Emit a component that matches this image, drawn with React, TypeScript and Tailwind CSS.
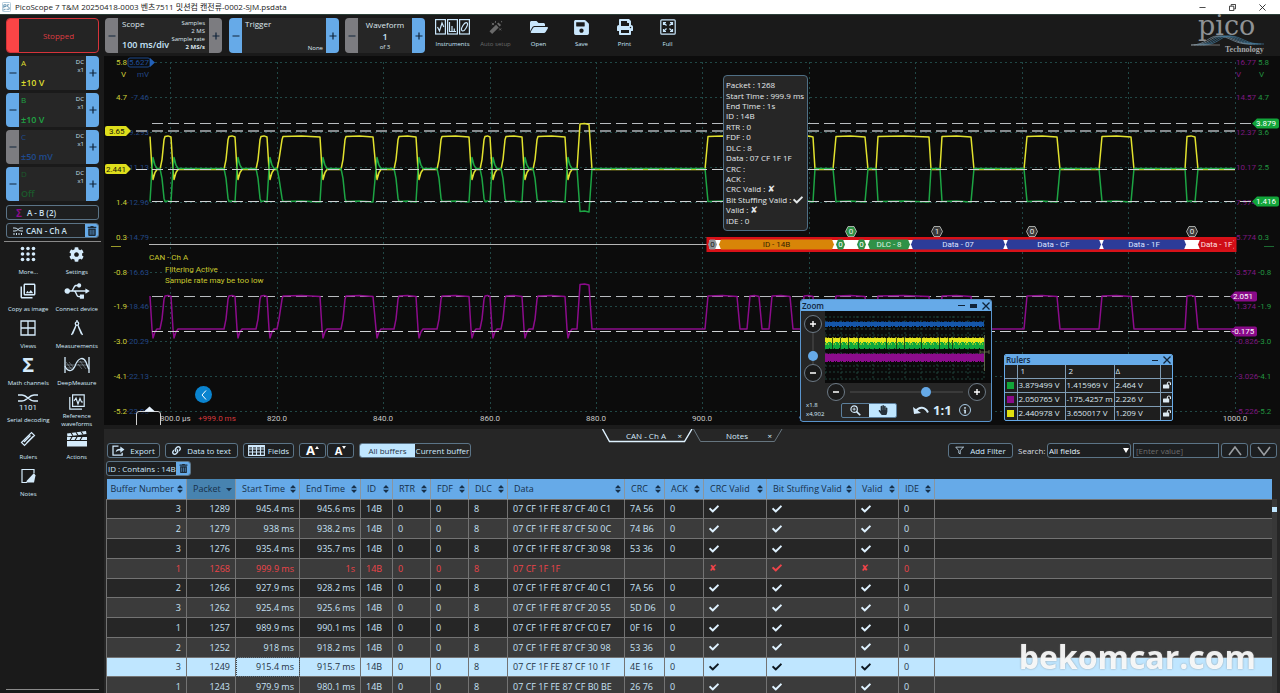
import { useState, type ReactNode } from "react";
import { FaCheck, FaCog, FaFolderOpen, FaHandPaper, FaLink, FaLockOpen, FaPrint, FaSave, FaTrashAlt, FaUsb } from "react-icons/fa";
import { FiFilter } from "react-icons/fi";
import { MdOutlinePhotoLibrary } from "react-icons/md";

/* ---------- data ---------- */

const CHANNELS = [
  { name: "A", range: "±10 V", color: "text-[#dede2e]", minus: true },
  { name: "B", range: "±10 V", color: "text-[#1fa544]", minus: true },
  { name: "C", range: "±50 mV", color: "text-[#1f4b8f]", minus: false },
  { name: "D", range: "Off", color: "text-[#1b5a2b]", minus: true },
];

const ROWS = [
  ["3", "1289", "945.4 ms", "945.6 ms", "07 CF 1F FE 87 CF 40 C1", "7A 56"],
  ["2", "1279", "938 ms", "938.2 ms", "07 CF 1F FE 87 CF 50 0C", "74 B6"],
  ["3", "1276", "935.4 ms", "935.7 ms", "07 CF 1F FE 87 CF 30 98", "53 36"],
  ["1", "1268", "999.9 ms", "1s", "07 CF 1F 1F", ""],
  ["2", "1266", "927.9 ms", "928.2 ms", "07 CF 1F FE 87 CF 40 C1", "7A 56"],
  ["3", "1262", "925.4 ms", "925.6 ms", "07 CF 1F FE 87 CF 20 55", "5D D6"],
  ["1", "1257", "989.9 ms", "990.1 ms", "07 CF 1F FE 87 CF C0 E7", "0F 16"],
  ["2", "1252", "918 ms", "918.2 ms", "07 CF 1F FE 87 CF 30 98", "53 36"],
  ["3", "1249", "915.4 ms", "915.7 ms", "07 CF 1F FE 87 CF 10 1F", "4E 16"],
  ["1", "1243", "979.9 ms", "980.1 ms", "07 CF 1F FE 87 CF B0 BE", "26 76"],
];

const COLUMNS = [
  { label: "Buffer Number", width: "w-[80px]", pad: "pl-1" },
  { label: "Packet", width: "w-[49px]", pad: "pl-[6px]" },
  { label: "Start Time", width: "w-[64px]", pad: "pl-[6px]" },
  { label: "End Time", width: "w-[61px]", pad: "pl-[6px]" },
  { label: "ID", width: "w-[32px]", pad: "pl-[6px]" },
  { label: "RTR", width: "w-[38px]", pad: "pl-[6px]" },
  { label: "FDF", width: "w-[38px]", pad: "pl-[6px]" },
  { label: "DLC", width: "w-[39px]", pad: "pl-[6px]" },
  { label: "Data", width: "w-[117px]", pad: "pl-[6px]" },
  { label: "CRC", width: "w-[40px]", pad: "pl-[6px]" },
  { label: "ACK", width: "w-[39px]", pad: "pl-[6px]" },
  { label: "CRC Valid", width: "w-[63px]", pad: "pl-[6px]" },
  { label: "Bit Stuffing Valid", width: "w-[89px]", pad: "pl-[6px]" },
  { label: "Valid", width: "w-[43px]", pad: "pl-[6px]" },
  { label: "IDE", width: "w-[36px]", pad: "pl-[6px]" },
];

const RULERS = [
  { color: "bg-[#12a53a]", one: "3.879499 V", two: "1.415969 V", delta: "2.464 V" },
  { color: "bg-[#8a0a8a]", one: "2.050765 V", two: "-175.4257 m", delta: "2.226 V" },
  { color: "bg-[#e0e010]", one: "2.440978 V", two: "3.650017 V", delta: "1.209 V" },
];

const GRID_X = [170, 277, 383, 490, 596, 702, 809, 915, 1022, 1128, 1235];
const GRID_Y = [62, 97, 132, 167, 202, 237, 272, 306, 341, 376, 411];
const AXIS_A = ["5.8", "4.7", "", "", "1.4", "0.3", "-0.8", "-1.9", "-3.0", "-4.1", "-5.2"];
const AXIS_C = ["", "-7.46", "-9.293", "-11.13", "-12.96", "-14.79", "-16.63", "-18.46", "-20.29", "-22.13", "-23.96"];
const AXIS_MATH = ["16.77", "14.57", "12.37", "10.17", "7.974", "5.774", "3.574", "1.374", "-0.826", "-3.026", "-5.226"];
const AXIS_B = ["5.8", "4.7", "3.6", "2.5", "", "0.3", "-0.8", "-1.9", "-3.0", "-4.1", "-5.2"];

// rise start, top start, top end, fall end
const PULSES = [
  [160, 165, 171, 173], [224, 229, 235, 237], [256, 261, 267, 269], [277, 283, 320, 322],
  [341, 346, 373, 376], [394, 399, 416, 418], [437, 442, 469, 471], [480, 485, 490, 492],
  [501, 506, 522, 524], [533, 538, 565, 567], [577, 580, 589, 592], [705, 708, 737, 740],
  [747, 750, 759, 762], [769, 772, 790, 793], [801, 804, 813, 815], [833, 836, 865, 868],
  [876, 878, 929, 931], [940, 942, 971, 974], [1024, 1027, 1057, 1060], [1099, 1102, 1131, 1134],
  [1185, 1187, 1195, 1198],
];
const LAST_SLOW = 9;
const TALL = 10;

const SEGMENTS = [
  { x: 708, w: 9, fill: "#8f9499", label: "0", ink: "#222" },
  { x: 719, w: 115, fill: "#d88508", label: "ID - 14B", ink: "#3a1f00" },
  { x: 836, w: 9, fill: "#2f9147", label: "0", ink: "#fff" },
  { x: 857, w: 9, fill: "#2f9147", label: "0", ink: "#fff" },
  { x: 868, w: 42, fill: "#2f9147", label: "DLC - 8", ink: "#dff5e2" },
  { x: 911, w: 94, fill: "#2c3c99", label: "Data - 07", ink: "#dde3ff" },
  { x: 1006, w: 95, fill: "#2c3c99", label: "Data - CF", ink: "#dde3ff" },
  { x: 1102, w: 84, fill: "#2c3c99", label: "Data - 1F", ink: "#dde3ff" },
  { x: 1198, w: 37, fill: "#cf0d16", label: "Data - 1F", ink: "#ffe0e0" },
];

const STUFF_BITS = [
  { x: 851, bit: "0", fill: "#2f9147" },
  { x: 937, bit: "1", fill: "#3a3a3a" },
  { x: 1032, bit: "0", fill: "#3a3a3a" },
  { x: 1192, bit: "0", fill: "#3a3a3a" },
];

function trace(base: number, high: number, tall: number, kick: number) {
  const pts: number[][] = [[150, high], [152, base], [153, base + kick], [155, base + kick * 0.3], [157, base]];
  PULSES.forEach(([rise, top, end, fall], i) => {
    const h = i === TALL ? tall : high;
    pts.push([rise, base]);
    if (i <= LAST_SLOW) pts.push([rise + 2, base + (h - base) * 0.3], [top - 1, base + (h - base) * 0.9]);
    pts.push([top, h], [(top + end) / 2, h - 0.6], [end, h + 0.5], [fall, base]);
    if (i <= LAST_SLOW) pts.push([fall + 1, base + kick], [fall + 3, base + kick * 0.3], [fall + 5, base]);
  });
  pts.push([1235, base]);
  return pts.map(p => p.join(",")).join(" ");
}

/* ---------- small pieces ---------- */

function SideButton({ sign, gray, label }: { sign: "+" | "−"; gray?: boolean; label: string }) {
  return (
    <button aria-label={label} className={`w-[13px] shrink-0 self-stretch flex items-center justify-center text-[#10243a] ${gray ? "bg-[#7c7c80]" : "bg-[#66aae8]"}`}>
      <svg viewBox="0 0 8 8" className="size-[8px]" stroke="currentColor" strokeWidth="1.2" fill="none">
        <path d={sign === "+" ? "M0.5 4H7.5M4 0.5V7.5" : "M0.5 4H7.5"} />
      </svg>
    </button>
  );
}

function SortIcon({ down }: { down?: boolean }) {
  return (
    <svg viewBox="0 0 6 8" className="w-[6px] h-[8px] shrink-0" fill="currentColor">
      {!down && <path d="M3 0L6 3.2H0Z" />}
      {down ? <path d="M0 3H6L3 6.2Z" /> : <path d="M0 4.8H6L3 8Z" />}
    </svg>
  );
}

function Tool({ label, icon, dim }: { label: string; icon: ReactNode; dim?: boolean }) {
  return (
    <button className={`w-[43px] flex flex-col items-center ${dim ? "text-[#6a6a6a]" : "text-[#c9e6fb]"}`}>
      <span className="h-[18px] flex items-center justify-center">{icon}</span>
      <span className="text-[6px] leading-[8px] mt-1">{label}</span>
    </button>
  );
}

function MenuItem({ label, icon }: { label: string; icon: ReactNode }) {
  return (
    <button className="h-[37px] w-full flex flex-col items-center text-[#d5ebfb]">
      <span className="h-5 flex items-center justify-center">{icon}</span>
      <span className="h-4 flex items-center justify-center text-center text-[6px] leading-[8px]">{label}</span>
    </button>
  );
}

function Mark({ ok }: { ok: boolean }) {
  return ok ? <FaCheck aria-label="yes" className="size-[10px] inline-block" /> : <span className="font-['DejaVu_Sans'] text-[9px]">✘</span>;
}

function RoundButton({ sign, label }: { sign: "+" | "−"; label: string }) {
  return (
    <button aria-label={label} className="size-[18px] shrink-0 rounded-full border border-[#6d7a86] bg-[#1a1a1a] flex items-center justify-center text-white">
      <svg viewBox="0 0 8 8" className="size-[8px]" stroke="currentColor" strokeWidth="1.4">
        <path d={sign === "+" ? "M1 4H7M4 1V7" : "M1 4H7"} />
      </svg>
    </button>
  );
}

/* ---------- icons ---------- */

const InstrumentsIcon = () => (
  <svg viewBox="0 0 35 16" className="w-[35px] h-[16px]" fill="none" stroke="currentColor" strokeWidth="1.2">
    <rect x="0.6" y="0.6" width="9.8" height="14.4" />
    <rect x="12.6" y="0.6" width="9.8" height="14.4" />
    <rect x="24.6" y="0.6" width="9.8" height="14.4" />
    <path d="M2.5 8L4.5 12L7 4L8.8 8M14.5 3V12.5H21M17 12V7M19.3 12V9.5" />
    <ellipse cx="29.5" cy="7.8" rx="2" ry="4.6" transform="rotate(30 29.5 7.8)" />
  </svg>
);

const WandIcon = () => (
  <svg viewBox="0 0 16 16" className="size-[15px]" fill="none" stroke="currentColor">
    <path d="M3 13.5L10 6.5" strokeWidth="4" />
    <path d="M11 5.5L12.5 4" strokeWidth="4" />
    <path d="M4 3L6.5 5.5M6.5 3L4 5.5M12 9L14 11M14 9L12 11M8 1V3M14.5 1V2.5" strokeWidth="1" />
  </svg>
);

const FullIcon = () => (
  <svg viewBox="0 0 16 16" className="size-4" fill="none" stroke="currentColor" strokeWidth="1.2">
    <rect x="0.8" y="0.8" width="14.4" height="14.4" rx="1" />
    <path d="M3.5 6V3.5H6M3.5 3.5L6.5 6.5M10 3.5H12.5V6M12.5 3.5L9.5 6.5M3.5 10V12.5H6M3.5 12.5L6.5 9.5M12.5 10V12.5H10M12.5 12.5L9.5 9.5" />
  </svg>
);

const DotsIcon = () => (
  <svg viewBox="0 0 16 16" className="size-4" fill="currentColor">
    {[2.5, 8, 13.5].map(y => [2.5, 8, 13.5].map(x => <circle key={`${x}-${y}`} cx={x} cy={y} r="1.8" />))}
  </svg>
);

const ViewsIcon = () => (
  <svg viewBox="0 0 16 16" className="size-4" fill="none" stroke="currentColor" strokeWidth="1.3">
    <path d="M1 1H15V15H1ZM8 1V15M1 8H15" />
  </svg>
);

const CompassIcon = () => (
  <svg viewBox="0 0 16 16" className="size-4" fill="none" stroke="currentColor" strokeWidth="1.3">
    <circle cx="8" cy="3.6" r="1.7" />
    <path d="M8 0V2M7.2 5L2.5 15M8.8 5L13.5 15M6.5 7L3.5 14M9.5 7L12.5 14" />
  </svg>
);

const DeepMeasureIcon = () => (
  <svg viewBox="0 0 26 16" className="w-[26px] h-[16px]" fill="none" stroke="currentColor" strokeWidth="1.3">
    <path d="M1 0V16M25 0V16" />
    <path d="M1 9C3 14 8 16 11 9C14 1 19 -1 22 5C23 8 24 11 25 12" />
    <path d="M2 8H24M2 5L8 13M5 5L10 11M14 7L18 12M16 4L22 12M13 5H22M3 11H10" strokeWidth="0.6" opacity="0.6" />
  </svg>
);

const SerialIcon = () => (
  <svg viewBox="0 0 20 18" className="w-[20px] h-[18px]" fill="none" stroke="currentColor" strokeWidth="1.6">
    <path d="M0 2H4C9 2 11 8 16 8H20M0 8H4C9 8 11 2 16 2H20" />
    <text x="10" y="17" textAnchor="middle" fontSize="8" fill="currentColor" stroke="none" className="font-['Roboto']">1101</text>
  </svg>
);

const RefWaveIcon = () => (
  <svg viewBox="0 0 16 16" className="size-4" fill="none" stroke="currentColor" strokeWidth="1.2">
    <path d="M3.6 0.8H15.2V12.4H3.6ZM0.8 3V15.2H13" />
    <path d="M5 7L7 4L9 10L11 4.5L12.5 8H14" />
  </svg>
);

const RulerIcon = () => (
  <svg viewBox="0 0 16 16" className="size-4" fill="none" stroke="currentColor" strokeWidth="1.2">
    <path d="M1.5 11.5L11.5 1.5L14.5 4.5L4.5 14.5ZM4 11L10.5 4.5M6.5 12L13 5.5" />
  </svg>
);

const ClapperIcon = () => (
  <svg viewBox="0 0 20 16" className="w-[20px] h-[16px]" fill="currentColor">
    <path d="M0 2.5L19 0L19.5 3L0.4 5.5ZM0 6H20V15.5H0Z" />
    <path d="M4 1.8L6 4.8M9 1.2L11 4.2M14 0.5L16 3.5M5 6L3 9.2M10 6L8 9.2M15 6L13 9.2M0 9.5H20" stroke="#1a1a1a" strokeWidth="1.1" />
  </svg>
);

const NotesIcon = () => (
  <svg viewBox="0 0 16 16" className="size-4" fill="none" stroke="currentColor" strokeWidth="1.2">
    <path d="M14 5V1.5H2V14.5H7" />
    <path d="M7 12.5L14 5L15.5 7.5L14 14.5H6Z" fill="currentColor" stroke="none" />
  </svg>
);

const ExportIcon = () => (
  <svg viewBox="0 0 14 12" className="w-[13px] h-[11px]" fill="none" stroke="currentColor" strokeWidth="1.4">
    <path d="M7 1.2H1V11H11V8.5" />
    <path d="M4 8C4 5 6 4 9 4V1.5L13.5 5L9 8.5V6C6.5 6 5 6.5 4 8Z" fill="currentColor" stroke="none" />
  </svg>
);

const FieldsIcon = () => (
  <svg viewBox="0 0 17 11" className="w-[17px] h-[11px]" fill="none" stroke="currentColor" strokeWidth="1.1">
    <path d="M0.6 0.6H16.4V10.4H0.6ZM4.5 1V10M8.5 1V10M12.5 1V10M1 4H16M1 7H16" />
    <path d="M0.6 1.5H16.4" strokeWidth="1.8" />
  </svg>
);

const UndoIcon = () => (
  <svg viewBox="0 0 16 10" className="w-[16px] h-[10px]" fill="none" stroke="currentColor" strokeWidth="2">
    <path d="M3 6C6 1.5 12 1.5 15 7.5" />
    <path d="M0 2L1 9L8 8Z" fill="currentColor" stroke="none" />
  </svg>
);

const PicoLogo = () => (
  <svg viewBox="0 0 84 40" className="w-[84px] h-[40px] overflow-visible" role="img" aria-label="pico Technology">
    <g fill="none" strokeWidth="0.7">
      {[0, 3, 6, 9, 12].map(d => (
        <path key={d} d={`M${1 + d} 30C${16 + d} 30 ${18 + d} 21 ${28 + d} 21C${40 + d} 21 ${44 + d} 30 ${62 + d} 29`} stroke={d < 5 ? "#7d97a8" : "#44789a"} />
      ))}
      <path d="M1 30H30" stroke="#9a9a9a" />
    </g>
    <text x="8" y="20" fontSize="27" fill="#8f9295" className="font-['DejaVu_Serif']">pico</text>
    <text x="35" y="37" fontSize="8" fill="#a3a6a8" className="font-['Liberation_Serif'] font-bold">Technology</text>
  </svg>
);

/* ---------- scope view ---------- */

function ScopeChart() {
  return (
    <svg viewBox="104 56 1176 369" className="block w-full font-['Roboto'] text-[8px]" role="img" aria-label="Oscilloscope traces">
      <g stroke="#214846" strokeWidth="1" strokeDasharray="2 3">
        {GRID_X.map(x => <path key={x} d={`M${x + 0.5} 62V411`} />)}
        {GRID_Y.map(y => <path key={y} d={`M150 ${y + 0.5}H1235`} />)}
      </g>

      {GRID_Y.map((y, i) => (
        <g key={y}>
          <text x="149" y={y + 3} textAnchor="end" fill="#224785">{AXIS_C[i]}</text>
          <text x="127" y={y + 3} textAnchor="end" fill="#cccc36">{AXIS_A[i]}</text>
          <text x="1236" y={y + 3} fill="#7d1880">{AXIS_MATH[i]}</text>
          <text x="1258" y={y + 3} fill="#229540">{AXIS_B[i]}</text>
        </g>
      ))}
      <text x="121" y="77" fill="#cccc36">V</text>
      <text x="137" y="77" fill="#224785">mV</text>
      <text x="1236" y="77" fill="#7d1880">V</text>
      <text x="1259" y="77" fill="#229540">V</text>
      <path d="M111 246.5H121" stroke="#9a9a2a" />
      <path d="M1264 246.5H1274" stroke="#1c6a32" />

      <g fill="none" stroke="#b9bcc0" strokeWidth="1" strokeDasharray="11 5">
        <path d="M152 123.5H1254M152 296.5H1232" />
        <path d="M136 131H1235" stroke="#85898d" strokeWidth="2" />
      </g>

      <g fill="none" strokeWidth="1.5" strokeLinejoin="round">
        <polyline points={trace(329, 296, 284.5, 9)} stroke="#8c0c8c" />
        <polyline points={trace(169.5, 136.5, 124, 10)} stroke="#e2e22e" />
        <polyline points={trace(168.5, 201.5, 211.5, -11)} stroke="#1da544" />
      </g>

      <g fill="none" stroke="#cfd2d4" strokeWidth="1" strokeDasharray="11 5">
        <path d="M136 169.5H1235M152 201.5H1254M152 331.5H1232" />
      </g>

      {/* ruler handles */}
      <g fill="#dede1c">
        <path d="M107 126H126L131 131L126 136H107Q105 136 105 134V128Q105 126 107 126Z" />
        <path d="M107 164H126L131 169L126 174H107Q105 174 105 172V166Q105 164 107 164Z" />
      </g>
      <g fill="#12a53a">
        <path d="M1277 118.5H1257L1252 123.5L1257 128.5H1277Q1279 128.5 1279 126.5V120.5Q1279 118.5 1277 118.5Z" />
        <path d="M1277 196.5H1257L1252 201.5L1257 206.5H1277Q1279 206.5 1279 204.5V198.5Q1279 196.5 1277 196.5Z" />
      </g>
      <g fill="#8a0a8a">
        <path d="M1255 291.5H1235L1230 296.5L1235 301.5H1255Q1257 301.5 1257 299.5V293.5Q1257 291.5 1255 291.5Z" />
        <path d="M1255 326.5H1235L1230 331.5L1235 336.5H1255Q1257 336.5 1257 334.5V328.5Q1257 326.5 1255 326.5Z" />
      </g>
      <g fill="#1a1a08">
        <text x="109" y="134">3.65</text>
        <text x="106" y="172">2.441</text>
      </g>
      <g fill="#ffffff">
        <text x="1256" y="126">3.879</text>
        <text x="1256" y="204">1.416</text>
        <text x="1233" y="299">2.051</text>
        <text x="1232" y="334">-0.175</text>
      </g>
      <rect x="128" y="58" width="22" height="9" rx="2" fill="none" stroke="#1b4688" />
      <path d="M150 58L155 62.5L150 67Z" fill="#2260b8" />
      <text x="129" y="65" fill="#1f4f9c">5.627</text>

      {/* serial decode lane */}
      <path d="M149 244.5H708" stroke="#b5b5b5" />
      <rect x="708" y="238.5" width="527" height="12" fill="#ffffff" stroke="#d81118" strokeWidth="3" />
      {SEGMENTS.map(s => (
        <g key={s.x}>
          <path d={`M${s.x} 244.5L${s.x + 2} 239.5H${s.x + s.w - 2}L${s.x + s.w} 244.5L${s.x + s.w - 2} 249.5H${s.x + 2}Z`} fill={s.fill} />
          <text x={s.x + s.w / 2} y="247" textAnchor="middle" fill={s.ink}>{s.label}</text>
        </g>
      ))}
      {STUFF_BITS.map(b => (
        <g key={b.x}>
          <path d={`M${b.x - 5.5} 231.5L${b.x - 3} 226.5H${b.x + 3}L${b.x + 5.5} 231.5L${b.x + 3} 236.5H${b.x - 3}Z`} fill={b.fill} stroke="#c4c8c4" strokeWidth="0.8" />
          <text x={b.x} y="234" textAnchor="middle" fill="#e8e8e8">{b.bit}</text>
        </g>
      ))}
      <g fill="#c9c92e">
        <text x="149" y="260">CAN - Ch A</text>
        <text x="165" y="272">Filtering Active</text>
        <text x="165" y="283">Sample rate may be too low</text>
      </g>

      {/* time axis */}
      <g fill="#c8c8c8" textAnchor="middle">
        {["820.0", "840.0", "860.0", "880.0", "900.0", "920.0"].map((t, i) => <text key={t} x={GRID_X[i + 1]} y="421">{t}</text>)}
        <text x="1235" y="421">1000.0</text>
      </g>
      <text x="160" y="421" fill="#c8c8c8">800.0 µs</text>
      <text x="198" y="421" fill="#d8383c">+999.0 ms</text>
      <path d="M136.5 425V414Q136.5 411.5 139 411.5H158Q160.5 411.5 160.5 414V425" fill="#0c0c0c" fillOpacity="0.5" stroke="#d0d0d0" />
      <path d="M144 411.5L149.5 406.5L155 411.5Z" fill="#e8f4ff" />
    </svg>
  );
}

function PacketTooltip() {
  const lines: [string, ReactNode][] = [
    ["Packet", "1268"], ["Start Time", "999.9 ms"], ["End Time", "1s"], ["ID", "14B"], ["RTR", "0"], ["FDF", "0"], ["DLC", "8"],
    ["Data", "07 CF 1F 1F"], ["CRC", ""], ["ACK", ""], ["CRC Valid", <Mark ok={false} />], ["Bit Stuffing Valid", <Mark ok />],
    ["Valid", <Mark ok={false} />], ["IDE", "0"],
  ];
  return (
    <div role="tooltip" className="absolute left-[619px] top-[19px] w-[85px] h-[156px] py-1 pl-[2px] flex flex-col rounded-sm border border-[#4f6f85] bg-[#262626] text-[#e4e8ea] text-[8px] leading-[10px] whitespace-nowrap">
      {lines.map(([name, value]) => (
        <div key={name} className="flex-1 min-h-0 flex items-center gap-[2px]">
          <span>{name} :</span>
          <span className="flex items-center">{value}</span>
        </div>
      ))}
    </div>
  );
}

function ZoomWindow() {
  const [hand, setHand] = useState(true);
  return (
    <section className="absolute right-[288px] bottom-[3px] w-[192px] rounded-[3px] border border-[#5a94cc] bg-[#262626] overflow-hidden text-[#d5ebfb]">
      <header className="h-[11px] pl-px pr-px flex items-center gap-[5px] bg-[#66aae8] text-[#10243a] text-[8px] leading-none">
        <h2 className="flex-1 font-semibold">Zoom</h2>
        <button aria-label="Minimise" className="w-[7px] h-px bg-[#10243a]" />
        <button aria-label="Dock" className="w-[7px] h-1 bg-[#10243a]" />
        <button aria-label="Close zoom">
          <svg viewBox="0 0 8 8" className="size-[8px]" stroke="currentColor" strokeWidth="1.3"><path d="M0.5 0.5L7.5 7.5M7.5 0.5L0.5 7.5" /></svg>
        </button>
      </header>
      <div className="flex">
        <div className="w-[24px] h-[72px] pt-1 flex flex-col items-center">
          <RoundButton sign="+" label="Zoom in vertically" />
          <input type="range" aria-label="Vertical zoom" defaultValue={16} className="appearance-none w-[10px] h-[31px] [writing-mode:vertical-lr] [direction:rtl] bg-[linear-gradient(#3a3a3a,#3a3a3a)] bg-no-repeat bg-center bg-[length:2px_100%] [&::-webkit-slider-thumb]:appearance-none [&::-webkit-slider-thumb]:size-[10px] [&::-webkit-slider-thumb]:rounded-full [&::-webkit-slider-thumb]:bg-[#66aae8]" />
          <RoundButton sign="−" label="Zoom out vertically" />
        </div>
        <svg viewBox="2 0 166 72" className="flex-1 h-[72px] bg-[#0a0a0a]">
          <g stroke="#245048" strokeWidth="0.8" strokeDasharray="2 2">
            {[6, 12, 18, 24, 31, 37, 43, 49, 55, 61, 68].map(y => <path key={y} d={`M2 ${y}H161`} />)}
            {[2, 18, 34, 50, 66, 82, 98, 114, 130, 145, 161].map(x => <path key={x} d={`M${x} 5V69`} />)}
          </g>
          <rect x="2" y="11" width="159" height="4" fill="#1556a8" />
          <rect x="2" y="27" width="159" height="6" fill="#e6e61c" />
          <rect x="2" y="32" width="159" height="5" fill="#10a83c" />
          <rect x="2" y="43" width="159" height="7" fill="#8c0c8c" />
          <path d="M2 11H161M2 15.5H161" stroke="#1556a8" strokeDasharray="3 1 1 2" />
          <path d="M2 32H161" stroke="#10a83c" strokeWidth="2" strokeDasharray="1 2 3 1" />
          <path d="M2 27H161M2 33H161" stroke="#e6e61c" strokeDasharray="2 1 1 3" />
          <path d="M2 37.5H161" stroke="#10a83c" strokeDasharray="4 1" />
          <path d="M2 43H161M2 50.5H161" stroke="#8c0c8c" strokeDasharray="3 1 1 1" />
          <path d="M9.5 27V38M17.5 27V38M25.5 27V38M35.5 27V38M63.5 27V38M73.5 27V38M81.5 27V38M98.5 27V38M116.5 27V38M125.5 27V38M129.5 29V38" stroke="#14300f" strokeWidth="0.8" />
          <path d="M161.5 24V60M157 41H166M157 39V43M166 39V43" stroke="#6f7a52" strokeWidth="0.8" />
        </svg>
      </div>
      <div className="pl-[26px] pr-[5px] flex items-center gap-[5px]">
        <RoundButton sign="−" label="Zoom out horizontally" />
        <input type="range" aria-label="Horizontal zoom" defaultValue={69} className="appearance-none flex-1 min-w-0 h-[10px] bg-[linear-gradient(#3a3a3a,#3a3a3a)] bg-no-repeat bg-center bg-[length:100%_2px] [&::-webkit-slider-thumb]:appearance-none [&::-webkit-slider-thumb]:size-[10px] [&::-webkit-slider-thumb]:rounded-full [&::-webkit-slider-thumb]:bg-[#66aae8]" />
        <RoundButton sign="+" label="Zoom in horizontally" />
      </div>
      <div className="h-[18px] pl-[5px] flex items-center">
        <div className="w-[35px] text-[6px] leading-[9px]">
          <div>x1.8</div>
          <div>x4,902</div>
        </div>
        <div className="w-[56px] h-[15px] flex rounded-[2px] border border-[#5c7f9c] overflow-hidden">
          <button aria-label="Zoom tool" onClick={() => setHand(false)} className={`flex-1 flex items-center justify-center ${hand ? "" : "bg-[#bfe6ff] text-[#26323c]"}`}>
            <svg viewBox="0 0 12 12" className="size-[11px]" fill="none" stroke="currentColor" strokeWidth="1.3">
              <circle cx="4.5" cy="4.5" r="3.5" />
              <path d="M4.5 2.8V6.2M2.8 4.5H6.2" strokeWidth="0.9" />
              <path d="M7.2 7.2L11.2 11.2" strokeWidth="1.8" />
            </svg>
          </button>
          <button aria-label="Pan tool" onClick={() => setHand(true)} className={`flex-1 flex items-center justify-center ${hand ? "bg-[#bfe6ff] text-[#26323c]" : ""}`}>
            <FaHandPaper className="size-[10px]" />
          </button>
        </div>
        <button aria-label="Undo zoom" className="ml-4"><UndoIcon /></button>
        <button className="ml-1 text-[13px] leading-none font-bold">1:1</button>
        <button aria-label="Zoom information" className="ml-[7px] size-[12px] rounded-full border border-[#a9cbe6] flex items-center justify-center">
          <svg viewBox="0 0 4 8" className="w-[4px] h-[7px]" fill="currentColor"><circle cx="2" cy="1" r="1" /><path d="M0.5 3H3V7.5H1.2V4H0.5Z" /></svg>
        </button>
      </div>
      <div className="h-[2px]" />
    </section>
  );
}

function RulersWindow() {
  const cell = "border-r border-[#7f9cb4] last:border-r-0 pl-px overflow-hidden whitespace-nowrap font-normal text-left";
  return (
    <section className="absolute right-[107px] bottom-1 w-[169px] rounded-[2px] border border-[#66aae8] bg-[#1e1e1e] overflow-hidden text-[8px] leading-none text-[#dce8f0]">
      <header className="h-[10px] pl-px pr-px flex items-center gap-[5px] bg-[#66aae8] text-[#10243a]">
        <h2 className="flex-1 font-semibold">Rulers</h2>
        <button aria-label="Minimise rulers" className="w-[6px] h-px bg-[#10243a]" />
        <button aria-label="Close rulers">
          <svg viewBox="0 0 8 8" className="size-[8px]" stroke="currentColor" strokeWidth="1.3"><path d="M0.5 0.5L7.5 7.5M7.5 0.5L0.5 7.5" /></svg>
        </button>
      </header>
      <table className="w-full table-fixed border-collapse">
        <thead>
          <tr className="h-[13px]">
            <th className={`${cell} w-[12px]`} aria-label="Colour" />
            <th className={`${cell} w-[48px]`}>&nbsp;1</th>
            <th className={`${cell} w-[49px]`}>&nbsp;2</th>
            <th className={`${cell} w-[46px]`}>Δ</th>
            <th className={cell} aria-label="Lock" />
          </tr>
        </thead>
        <tbody>
          {RULERS.map(r => (
            <tr key={r.color} className="h-[14px] border-t border-[#7f9cb4]">
              <td className={cell}><span className={`block size-[7px] ml-px ${r.color}`} /></td>
              <td className={cell}>{r.one}</td>
              <td className={cell}>{r.two}</td>
              <td className={cell}>{r.delta}</td>
              <td className={cell}><button aria-label="Lock ruler" className="block ml-px"><FaLockOpen className="size-2" /></button></td>
            </tr>
          ))}
        </tbody>
      </table>
    </section>
  );
}

/* ---------- decode panel ---------- */

function PacketTable() {
  const [selected, setSelected] = useState("1249");
  return (
    <div className="flex mt-[3px] ml-[2px]">
      <table className="flex-1 w-full h-[218px] table-fixed border-collapse text-[9px] leading-none">
        <thead>
          <tr className="h-[20px] bg-[#66aae8] text-[#173049]">
            {COLUMNS.map(c => (
              <th key={c.label} className={`${c.width} p-0 font-normal border-r border-[#8a959e] ${c.label === "Packet" ? "bg-[#4783b0]" : ""}`}>
                <button className={`w-full ${c.pad} pr-[3px] flex items-center justify-between whitespace-nowrap`}>
                  {c.label}
                  <SortIcon down={c.label === "Packet"} />
                </button>
              </th>
            ))}
            <th aria-label="Spacer" />
          </tr>
        </thead>
        <tbody>
          {ROWS.map(([buffer, packet, start, end, data, crc], i) => {
            const bad = packet === "1268";
            const active = packet === selected;
            const tone = active ? "bg-[#bfe6ff] text-[#1f3344]" : `${i % 2 ? "bg-[#3b3b3b]" : "bg-[#262626]"} ${bad ? "text-[#ee4449]" : "text-[#c6e1f5]"}`;
            const num = "p-0 pr-[5px] text-right border border-[#737373]";
            const txt = "p-0 pl-[5px] border border-[#737373] whitespace-nowrap";
            const mark = `${txt} ${bad ? "text-[#f0444a]" : active ? "text-[#101a22]" : "text-[#dff2ff]"}`;
            return (
              <tr key={packet} onClick={() => setSelected(packet)} className={tone}>
                <td className={num}>{buffer}</td>
                <td className={num}>{packet}</td>
                <td className={`${num} ${active ? "outline-1 outline-dotted -outline-offset-1 outline-[#3a4650]" : ""}`}>{start}</td>
                <td className={num}>{end}</td>
                <td className={txt}>14B</td>
                <td className={txt}>0</td>
                <td className={txt}>0</td>
                <td className={txt}>8</td>
                <td className={txt}>{data}</td>
                <td className={txt}>{crc}</td>
                <td className={txt}>{bad ? "" : "0"}</td>
                <td className={mark}><Mark ok={!bad} /></td>
                <td className={mark}><Mark ok /></td>
                <td className={mark}><Mark ok={!bad} /></td>
                <td className={txt}>0</td>
                <td className="border-y border-[#737373]" />
              </tr>
            );
          })}
        </tbody>
      </table>
      <div className="w-[5px] mt-5 mr-[3px] bg-[#383838]">
        <div className="h-[5px] mt-[8px] bg-[#bfe6ff]" />
      </div>
    </div>
  );
}

function DecodePanel() {
  const [buffers, setBuffers] = useState("all");
  const btn = "h-[15px] flex items-center justify-center rounded-[3px] border border-[#5b7487] bg-[#1d1f21] text-[#cfe8fb] whitespace-nowrap";
  return (
    <section className="flex-1 min-h-0 overflow-hidden border-t-4 border-[#1b1b1b] bg-[#262626] text-[8px] leading-none">
      <div role="tablist" className="h-[14px] pl-[498px] flex text-[#d5ebfb]">
        <div className="grid w-[91px] h-[14px]">
          <svg viewBox="0 0 91 14" className="[grid-area:1/1] size-full" fill="none" stroke="#dff2ff" strokeWidth="1.4"><path d="M0.5 0L7.5 12.5H82.5L90 0" /></svg>
          <div className="[grid-area:1/1] pl-6 pr-[11px] flex items-center justify-between">
            <button role="tab" aria-selected="true">CAN - Ch A</button>
            <button aria-label="Close CAN - Ch A">×</button>
          </div>
        </div>
        <div className="grid w-[90px] h-[14px]">
          <svg viewBox="0 0 90 14" className="[grid-area:1/1] size-full" fill="none" stroke="#66757f"><path d="M0.5 0L7.5 12.5H81.5L89 0" /></svg>
          <div className="[grid-area:1/1] pl-[33px] pr-[11px] flex items-center justify-between">
            <button role="tab" aria-selected="false">Notes</button>
            <button aria-label="Close Notes">×</button>
          </div>
        </div>
      </div>

      <div className="pl-[3px] pr-[3px] flex items-center">
        <button className={`${btn} w-[53px] gap-[5px]`}><ExportIcon />Export</button>
        <button className={`${btn} w-[73px] gap-[6px] ml-[5px]`}><FaLink className="size-[9px]" />Data to text</button>
        <button className={`${btn} w-[51px] gap-[3px] ml-[5px]`}><FieldsIcon />Fields</button>
        <button aria-label="Larger text" className={`${btn} w-[27px] ml-[5px] text-[13px] font-bold text-white`}>
          A<svg viewBox="0 0 4 3" className="w-[4px] h-[3px] self-start mt-[2px]" fill="currentColor"><path d="M0 3L2 0L4 3Z" /></svg>
        </button>
        <button aria-label="Smaller text" className={`${btn} w-[27px] ml-px text-[11px] font-bold text-white`}>
          A<svg viewBox="0 0 4 3" className="w-[4px] h-[3px] self-start mt-[2px]" fill="currentColor"><path d="M0 0H4L2 3Z" /></svg>
        </button>
        <div className="h-[15px] w-[112px] ml-[5px] flex rounded-[3px] border border-[#5b7487] overflow-hidden text-[#cfe8fb] whitespace-nowrap">
          <button onClick={() => setBuffers("all")} className={`flex-1 ${buffers === "all" ? "bg-[#bfe6ff] text-[#1f3344]" : ""}`}>All buffers</button>
          <button onClick={() => setBuffers("current")} className={`flex-1 ${buffers === "current" ? "bg-[#bfe6ff] text-[#1f3344]" : ""}`}>Current buffer</button>
        </div>
        <div className="flex-1" />
        <button className={`${btn} w-[65px] gap-[6px]`}><FiFilter className="size-[9px]" />Add Filter</button>
        <label htmlFor="search-field" className="ml-[5px] w-[29px] text-[#d9dde0]">Search:</label>
        <div className="relative w-[84px]">
          <select id="search-field" className="block w-full h-[15px] pl-px appearance-none rounded-[3px] border border-[#5b7487] bg-[#1d1f21] text-[#e2f2fd]">
            <option>All fields</option>
            <option>Data</option>
            <option>ID</option>
          </select>
          <svg viewBox="0 0 6 5" className="absolute right-[2px] top-[5px] w-[6px] h-[5px] pointer-events-none" fill="#ffffff"><path d="M0 0H6L3 5Z" /></svg>
        </div>
        <input aria-label="Search value" placeholder="[Enter value]" className="w-[86px] h-[15px] ml-[2px] pl-[2px] border border-[#5b7487] bg-[#1d1f21] text-white placeholder:text-[#6c6c6c]" />
        <button aria-label="Previous match" className={`${btn} w-[27px] ml-[2px]`}>
          <svg viewBox="0 0 14 10" className="w-[14px] h-[10px]" fill="none" stroke="#9a9ea2" strokeWidth="1.6"><path d="M1 9L7 1L13 9" /></svg>
        </button>
        <button aria-label="Next match" className={`${btn} w-[27px] ml-[2px]`}>
          <svg viewBox="0 0 14 10" className="w-[14px] h-[10px]" fill="none" stroke="#9a9ea2" strokeWidth="1.6"><path d="M1 1L7 9L13 1" /></svg>
        </button>
      </div>

      <div className="mt-[3px] pl-[2px]">
        <div className="w-[85px] h-[15px] flex rounded-[3px] border border-[#5b7487] overflow-hidden bg-[#1d1f21] text-[#cfe8fb]">
          <span className="flex-1 pl-px flex items-center whitespace-nowrap">ID : Contains : 14B</span>
          <button aria-label="Remove filter" className="w-[15px] shrink-0 bg-[#66aae8] text-[#1d2b38] flex items-center justify-center"><FaTrashAlt className="size-[9px]" /></button>
        </div>
      </div>

      <PacketTable />
    </section>
  );
}

/* ---------- page ---------- */

export default function App() {
  return (
    <div className="h-screen flex flex-col overflow-hidden bg-[#1a1a1a] font-['Open_Sans','Noto_Sans_CJK_KR',sans-serif] text-[8px] leading-none">
      <header className="h-[15px] shrink-0 pl-[2px] pr-[14px] flex items-center bg-white text-[#222] border-b border-[#2c4038]">
        <svg viewBox="0 0 10 11" className="w-[9px] h-[10px] mr-1" fill="none" stroke="#5f8fae">
          <rect x="0.5" y="0.5" width="9" height="10" rx="1" stroke="#a9c6d8" />
          <path d="M2 7V3H4.5V5H2M8 3H6V5L8 6V8H5M1 9L4 8" />
        </svg>
        <h1 className="flex-1">PicoScope 7 T&amp;M 20250418-0003 벤츠7511 밋션컴 캔전류-0002-SJM.psdata</h1>
        <div className="flex gap-[23px]">
          <button aria-label="Minimise window"><svg viewBox="0 0 8 8" className="size-[7px]" stroke="#333"><path d="M0.5 4H7.5" /></svg></button>
          <button aria-label="Restore window"><svg viewBox="0 0 8 8" className="size-[7px]" fill="none" stroke="#222"><path d="M0.5 2.5H5.5V7.5H0.5ZM2.5 2V0.5H7.5V5.5H6" /></svg></button>
          <button aria-label="Close window"><svg viewBox="0 0 8 8" className="size-[7px]" stroke="#222"><path d="M0.5 0.5L7.5 7.5M7.5 0.5L0.5 7.5" /></svg></button>
        </div>
      </header>

      <div className="flex-1 min-h-0 flex">
        <aside className="w-[104px] shrink-0 pt-[3px] pl-[6px] pr-[5px] pb-[3px] flex flex-col">
          <button className="h-[35px] shrink-0 flex rounded-[4px] border border-[#d5333a] bg-[#242424] overflow-hidden text-[#dd3c42]">
            <span className="w-[12px] h-full bg-[#fb4546]" />
            <span className="flex-1 self-center">Stopped</span>
          </button>

          <div className="mt-[3px] flex flex-col gap-[3px]">
            {CHANNELS.map(c => (
              <div key={c.name} className={`h-[34px] flex rounded-[4px] bg-[#262626] overflow-hidden ${c.color}`}>
                <SideButton sign="−" gray={!c.minus} label={`Decrease ${c.name} range`} />
                <div className="flex-1 pl-[2px] py-[3px] flex flex-col justify-between">
                  <span>{c.name}</span>
                  <span className="text-[9px] font-semibold whitespace-nowrap">{c.range}</span>
                </div>
                <div className="pt-[2px] pr-[2px] text-[6px] leading-[8px] text-right text-[#c9e0f0]">DC<br />x1</div>
                <SideButton sign="+" label={`Increase ${c.name} range`} />
              </div>
            ))}
          </div>

          <button className="mt-1 h-[15px] shrink-0 pl-2 flex items-center gap-1 rounded-[3px] border border-[#5b7487] bg-[#1e1f20] font-semibold text-[#c9e0f0]">
            <span className="w-2 text-[10px] font-bold text-[#8c0c8c]">Σ</span>A - B (2)
          </button>
          <div className="mt-[3px] h-[15px] shrink-0 flex rounded-[3px] border border-[#5b7487] bg-[#1e1f20] overflow-hidden text-[#c9e0f0]">
            <button className="flex-1 pl-[6px] flex items-center gap-[3px] font-semibold">
              <svg viewBox="0 0 10 8" className="w-[10px] h-[8px]" fill="none" stroke="currentColor"><path d="M0 1H2C5 1 5 4 8 4H10M0 4H2C5 4 5 1 8 1H10M1 6V8M3.5 6V8M6 6V8M8.5 6V8" /></svg>
              CAN - Ch A
            </button>
            <button aria-label="Delete CAN - Ch A" className="w-[13px] bg-[#66aae8] text-[#1d2b38] flex items-center justify-center"><FaTrashAlt className="size-[10px]" /></button>
          </div>

          <nav className="mt-[3px] pt-[2px] border-t border-[#8a8a8a] grid grid-cols-2 -mx-[2px]">
            <MenuItem label="More..." icon={<DotsIcon />} />
            <MenuItem label="Settings" icon={<FaCog className="size-[15px]" />} />
            <MenuItem label="Copy as image" icon={<MdOutlinePhotoLibrary className="size-[18px]" />} />
            <MenuItem label="Connect device" icon={<FaUsb className="w-[26px] h-[20px]" />} />
            <MenuItem label="Views" icon={<ViewsIcon />} />
            <MenuItem label="Measurements" icon={<CompassIcon />} />
            <MenuItem label="Math channels" icon={<span className="text-[20px] leading-none font-bold">Σ</span>} />
            <MenuItem label="DeepMeasure" icon={<DeepMeasureIcon />} />
            <MenuItem label="Serial decoding" icon={<SerialIcon />} />
            <MenuItem label="Reference waveforms" icon={<RefWaveIcon />} />
            <MenuItem label="Rulers" icon={<RulerIcon />} />
            <MenuItem label="Actions" icon={<ClapperIcon />} />
            <MenuItem label="Notes" icon={<NotesIcon />} />
          </nav>
          <div className="mt-auto h-px bg-[#8a8a8a]" />
        </aside>

        <main className="flex-1 min-w-0 flex flex-col">
          <div className="h-[41px] shrink-0 pt-[3px] pl-px flex items-start text-[#dfe8ee]">
            <div className="w-[117px] h-[35px] flex rounded-[4px] bg-[#262626] overflow-hidden">
              <SideButton sign="−" gray label="Shorter timebase" />
              <div className="flex-1 pl-1 pt-[2px] pb-1 flex flex-col justify-between">
                <span>Scope</span>
                <span className="text-[9px] font-semibold text-[#c9e6fb] whitespace-nowrap">100 ms/div</span>
              </div>
              <div className="pt-px pr-1 text-[6px] leading-[8px] text-right whitespace-nowrap">
                Samples<br />2 MS<br />Sample rate<br /><b>2 MS/s</b>
              </div>
              <SideButton sign="+" gray label="Longer timebase" />
            </div>
            <div className="w-[110px] h-[35px] ml-[7px] flex rounded-[4px] bg-[#262626] overflow-hidden">
              <SideButton sign="−" label="Previous trigger" />
              <div className="flex-1 pl-[3px] pr-[3px] pt-[2px] pb-px flex flex-col justify-between">
                <span>Trigger</span>
                <span className="text-[6px] leading-[8px] text-right">None</span>
              </div>
              <SideButton sign="+" label="Next trigger" />
            </div>
            <div className="w-[80px] h-[35px] ml-[6px] flex rounded-[4px] bg-[#262626] overflow-hidden">
              <SideButton sign="−" gray label="Previous waveform" />
              <div className="flex-1 pt-[3px] pb-[2px] flex flex-col items-center justify-between">
                <span>Waveform</span>
                <span className="text-[9px] font-semibold text-[#c9e6fb]">1</span>
                <span className="text-[6px] leading-[7px]">of 3</span>
              </div>
              <SideButton sign="+" label="Next waveform" />
            </div>
            <div className="ml-[6px] flex">
              <Tool label="Instruments" icon={<InstrumentsIcon />} />
              <Tool label="Auto setup" icon={<WandIcon />} dim />
              <Tool label="Open" icon={<FaFolderOpen className="size-[18px]" />} />
              <Tool label="Save" icon={<FaSave className="size-[17px]" />} />
              <Tool label="Print" icon={<FaPrint className="size-4" />} />
              <Tool label="Full" icon={<FullIcon />} />
            </div>
            <div className="ml-auto mr-[6px] -mt-[3px]"><PicoLogo /></div>
          </div>

          <div className="relative shrink-0 bg-[#0c0c0c]">
            <ScopeChart />
            <button aria-label="Earlier data" className="absolute left-[91px] bottom-[22px] size-[17px] rounded-full bg-[#0a84d0] text-white flex items-center justify-center">
              <svg viewBox="0 0 6 10" className="w-[6px] h-[10px]" fill="none" stroke="currentColor" strokeWidth="1"><path d="M5 0.5L1 5L5 9.5" /></svg>
            </button>
            <PacketTooltip />
            <ZoomWindow />
            <RulersWindow />
          </div>

          <DecodePanel />
        </main>
      </div>

      <div className="fixed right-[24px] bottom-[20px] text-[32px] leading-none font-bold text-white/90 [text-shadow:0_0_2px_rgba(120,120,120,0.7)] pointer-events-none">bekomcar.com</div>
    </div>
  );
}
